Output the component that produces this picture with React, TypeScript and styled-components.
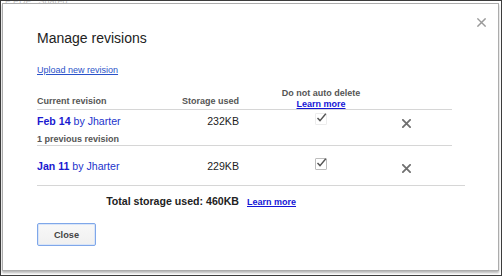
import React, { FC } from "react";
import styled, { createGlobalStyle } from "styled-components";

const Global = createGlobalStyle`
  html, body {
    margin: 0;
    padding: 0;
    background: #fff;
  }
  body {
    font-family: "Liberation Sans", Arial, sans-serif;
  }
`;

const Frame = styled.div`
  position: relative;
  width: 502px;
  height: 276px;
  box-sizing: border-box;
  border: 1px solid #3c3c3c;
  background: #fff;
  overflow: hidden;
`;

const BehindText = styled.div`
  padding: 0 0 0 4px;
  margin-top: -5px;
  font-size: 9px;
  line-height: 10px;
  color: #c4c4c4;
`;

const Dialog = styled.div`
  position: absolute;
  top: 2px;
  left: 1px;
  right: 2px;
  bottom: 4px;
  box-sizing: border-box;
  padding: 26px 0 0 34px;
  background: #fff;
  border: 1px solid #acacac;
  box-shadow: 0 2px 2px rgba(0, 0, 0, 0.28);
  display: flex;
  flex-direction: column;
  align-items: flex-start;
  color: #222;
`;

const CloseIcon = styled.button`
  position: absolute;
  top: 14px;
  right: 12px;
  width: 9px;
  height: 9px;
  padding: 0;
  border: 0;
  background: none;
  display: flex;
  cursor: pointer;
`;

const Title = styled.h1`
  margin: 0;
  font-size: 14px;
  line-height: 17px;
  font-weight: normal;
  color: #222;
`;

const UploadLink = styled.a`
  margin-top: 18px;
  font-size: 9px;
  line-height: 11px;
  color: #2a52c9;
  text-decoration: underline;
  cursor: pointer;
`;

const Table = styled.div`
  margin-top: 12px;
  width: 415px;
`;

const Row = styled.div<{ $line?: boolean; $pt?: number; $pb?: number }>`
  display: grid;
  grid-template-columns: 113px 89px 164px 49px;
  align-items: end;
  padding-top: ${(p) => p.$pt || 0}px;
  padding-bottom: ${(p) => p.$pb || 0}px;
  border-bottom: ${(p) => (p.$line ? "1px solid #d6d6d6" : "0")};
`;

const HeadCell = styled.div<{ $align?: string; $lift?: number }>`
  font-size: 9px;
  line-height: 10.5px;
  font-weight: bold;
  color: #555;
  text-align: ${(p) => p.$align || "left"};
  padding-bottom: ${(p) => p.$lift || 0}px;
`;

const HeadLink = styled.a`
  display: block;
  color: #1515d6;
  text-decoration: underline;
  cursor: pointer;
`;

const Revision = styled.div`
  font-size: 10.6px;
  line-height: 13px;
  color: #2233cc;
  white-space: nowrap;
  b {
    color: #1a1ad0;
  }
`;

const Size = styled.div`
  font-size: 10.6px;
  line-height: 13px;
  color: #222;
  text-align: right;
`;

const CheckCell = styled.div`
  display: flex;
  justify-content: center;
  align-self: start;
`;

const CheckBox = styled.span<{ $border: string }>`
  position: relative;
  width: 10px;
  height: 10px;
  border: 1px solid ${(p) => p.$border};
  border-radius: 1px;
  background: #fff;
  svg {
    position: absolute;
    left: 0;
    top: -2px;
  }
`;

const DeleteCell = styled.div`
  display: flex;
  align-self: start;
  padding-top: 6px;
  margin-left: -1px;
`;

const Note = styled.div`
  grid-column: 1 / 5;
  margin-top: 6px;
  font-size: 9px;
  line-height: 11px;
  font-weight: bold;
  color: #555;
`;

const Divider = styled.div`
  margin-top: 12px;
  width: 428px;
  height: 1px;
  background: #d6d6d6;
`;

const TotalRow = styled.div`
  margin-top: 5px;
  width: 415px;
  display: grid;
  grid-template-columns: 202px 1fr;
  align-items: baseline;
`;

const TotalText = styled.div`
  font-size: 10.6px;
  line-height: 13px;
  font-weight: bold;
  color: #222;
  text-align: right;
`;

const TotalLink = styled.a`
  margin-left: 8px;
  font-size: 9px;
  font-weight: bold;
  color: #1515d6;
  text-decoration: underline;
  cursor: pointer;
`;

const Button = styled.button`
  margin-top: 14px;
  width: 59px;
  height: 23px;
  box-sizing: border-box;
  border: 1px solid #7fa7e9;
  border-radius: 2px;
  background: linear-gradient(#f8f8f8, #f0f0f0);
  box-shadow: inset 0 0 0 1px #d9e5f8;
  font-family: "Liberation Sans", Arial, sans-serif;
  font-size: 9.2px;
  font-weight: bold;
  color: #444;
  padding: 0;
  cursor: pointer;
`;

const Cross: FC<{ size: number; color: string; stroke: number }> = ({ size, color, stroke }) => (
  <svg width={size} height={size} viewBox="0 0 10 10">
    <path d="M1 1 L9 9 M9 1 L1 9" stroke={color} strokeWidth={stroke} strokeLinecap="square" fill="none" />
  </svg>
);

const Check: FC = () => (
  <svg width="11" height="11" viewBox="0 0 11 11">
    <path d="M1.5 6 L4 8.6 L9.8 1.8" stroke="#555" strokeWidth="1.4" fill="none" />
  </svg>
);

type Rev = { date: string; size: string; border: string };

const revisions: Rev[] = [
  { date: "Feb 14", size: "232KB", border: "#ececec" },
  { date: "Jan 11", size: "229KB", border: "#bdbdbd" },
];

const RevisionCells: FC<{ rev: Rev }> = ({ rev }) => (
  <>
    <Revision>
      <b>{rev.date}</b> by Jharter
    </Revision>
    <Size>{rev.size}</Size>
    <CheckCell>
      <CheckBox $border={rev.border}>
        <Check />
      </CheckBox>
    </CheckCell>
    <DeleteCell>
      <Cross size={9} color="#6f6f6f" stroke={2} />
    </DeleteCell>
  </>
);

const App: FC = () => {
  return (
    <>
      <Global />
      <Frame>
        <BehindText>F PDF&nbsp;&nbsp;&nbsp;Shared</BehindText>
        <Dialog>
          <CloseIcon aria-label="Close">
            <Cross size={9} color="#9a9a9a" stroke={1.6} />
          </CloseIcon>
          <Title>Manage revisions</Title>
          <UploadLink>Upload new revision</UploadLink>
          <Table>
            <Row $line>
              <HeadCell $lift={3}>Current revision</HeadCell>
              <HeadCell $align="right" $lift={3}>
                Storage used
              </HeadCell>
              <HeadCell $align="center">
                Do not auto delete
                <HeadLink>Learn more</HeadLink>
              </HeadCell>
              <div />
            </Row>
            <Row $line $pt={3}>
              <RevisionCells rev={revisions[0]} />
              <Note>1 previous revision</Note>
            </Row>
            <Row $pt={12}>
              <RevisionCells rev={revisions[1]} />
            </Row>
          </Table>
          <Divider />
          <TotalRow>
            <TotalText>Total storage used: 460KB</TotalText>
            <div>
              <TotalLink>Learn more</TotalLink>
            </div>
          </TotalRow>
          <Button>Close</Button>
        </Dialog>
      </Frame>
    </>
  );
};

export default App;
